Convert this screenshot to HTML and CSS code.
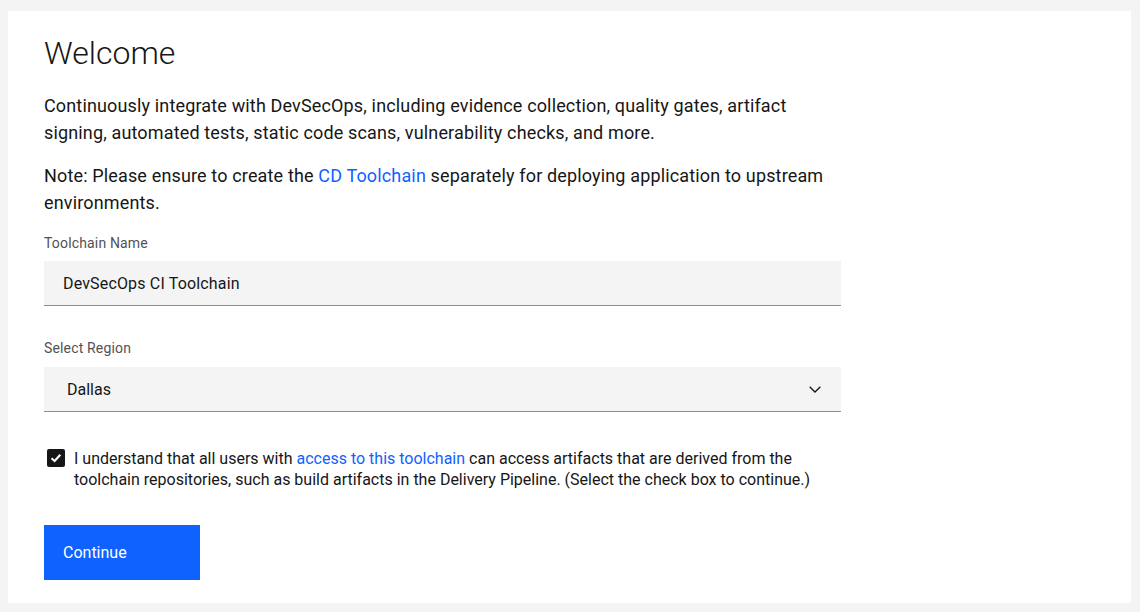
FILE: index.html
```html
<!DOCTYPE html>
<html lang="en">
<head>
<meta charset="utf-8">
<title>Welcome</title>
<link rel="stylesheet" href="styles.css">
</head>
<body>
<main class="card">
  <div class="content">
    <h1 class="title">Welcome</h1>
    <p class="lead">Continuously integrate with DevSecOps, including evidence collection, quality gates, artifact signing, automated tests, static code scans, vulnerability checks, and more.</p>
    <p class="lead note">Note: Please ensure to create the <a class="link" href="#">CD Toolchain</a> separately for deploying application to upstream environments.</p>

    <div class="field field-first">
      <label class="field-label" for="tc-name">Toolchain Name</label>
      <input class="text-input" id="tc-name" type="text" value="DevSecOps CI Toolchain">
    </div>

    <div class="field field-second">
      <label class="field-label" for="region">Select Region</label>
      <div class="select-wrap">
        <select class="select-input" id="region">
          <option>Dallas</option>
        </select>
        <svg class="chevron" width="12" height="7" viewBox="0 0 12 7" aria-hidden="true"><polyline points="0.7,0.7 6,6 11.3,0.7" fill="none" stroke="#161616" stroke-width="1.3"/></svg>
      </div>
    </div>

    <div class="check-row">
      <span class="check-box" aria-hidden="true">
        <svg width="18" height="18" viewBox="0 0 18 18"><polyline points="4.5,9.2 7.6,12 13.3,5.8" fill="none" stroke="#ffffff" stroke-width="2"/></svg>
      </span>
      <p class="check-text">I understand that all users with <a class="link" href="#">access to this toolchain</a> can access artifacts that are derived from the toolchain repositories, such as build artifacts in the Delivery Pipeline. (Select the check box to continue.)</p>
    </div>

    <button class="primary-btn" type="button">Continue</button>
  </div>
</main>
</body>
</html>
```

FILE: styles.css
```css
* { box-sizing: border-box; }

html, body {
  height: 100%;
}

body {
  margin: 0;
  padding: 11px 9px 9px 8px;
  background: #f4f4f4;
  font-family: Roboto, "Liberation Sans", sans-serif;
  color: #161616;
}

.card {
  height: 100%;
  background: #ffffff;
  padding: 22px 36px;
}

.content {
  width: 797px;
}

.title {
  margin: 0 0 19px;
  font-size: 32px;
  line-height: 40px;
  font-weight: 300;
}

.lead {
  margin: 0 0 16px;
  font-size: 18px;
  line-height: 27px;
  font-weight: 400;
  letter-spacing: 0.15px;
}

.lead.note {
  margin-bottom: 0;
}

.link {
  color: #0f62fe;
  text-decoration: none;
}

.field {
  display: flex;
  flex-direction: column;
}

.field-first { margin-top: 18px; }
.field-second { margin-top: 33px; }

.field-label {
  font-size: 14px;
  line-height: 18px;
  color: #525252;
  margin-bottom: 9px;
  letter-spacing: 0.16px;
}

.field-second .field-label {
  margin-bottom: 10px;
}

.text-input,
.select-input {
  display: block;
  width: 100%;
  height: 45px;
  margin: 0;
  border: 0;
  border-bottom: 1px solid #8d8d8d;
  border-radius: 0;
  background: #f4f4f4;
  font-family: inherit;
  font-size: 16px;
  color: #161616;
  outline: none;
}

.text-input {
  padding: 0 19px;
  letter-spacing: 0.16px;
}

.select-wrap {
  position: relative;
}

.select-input {
  appearance: none;
  -webkit-appearance: none;
  padding: 0 48px 0 23px;
}

.chevron {
  position: absolute;
  right: 20px;
  top: 19px;
}

.check-row {
  display: flex;
  align-items: flex-start;
  margin-top: 36px;
}

.check-box {
  flex: none;
  width: 18px;
  height: 18px;
  margin: 1px 9px 0 3px;
  background: #161616;
  border-radius: 2px;
}

.check-box svg { display: block; }

.check-text {
  margin: 0;
  font-size: 16px;
  line-height: 21px;
}

.primary-btn {
  display: block;
  margin-top: 35px;
  width: 156px;
  height: 55px;
  padding: 0 19px;
  border: 0;
  border-radius: 0;
  background: #0f62fe;
  color: #ffffff;
  font-family: inherit;
  font-size: 16px;
  text-align: left;
}
```
